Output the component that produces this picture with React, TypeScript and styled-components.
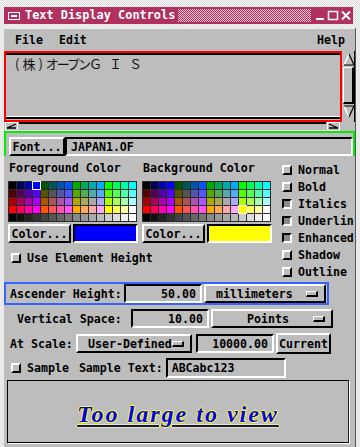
import React from 'react';
import styled, { createGlobalStyle, css } from 'styled-components';

const GlobalStyle = createGlobalStyle`
  html, body { margin: 0; padding: 0; }
  body {
    width: 360px;
    height: 447px;
    overflow: hidden;
    background: repeating-conic-gradient(#f6f6f6 0 25%, #dedede 0 50%) 0 0 / 2px 2px;
    font-family: "DejaVu Sans Mono", "Liberation Mono", monospace;
  }
`;

const raised = css`
  border: 2px solid;
  border-color: #ffffff #000000 #000000 #ffffff;
`;

const sunken = css`
  border: 2px solid;
  border-color: #000000 #ffffff #ffffff #000000;
`;

const motifFont = css`
  font-family: "DejaVu Sans Mono", "Liberation Mono", monospace;
  font-size: 11.6px;
  font-weight: bold;
  color: #000;
`;

// 窗口外框
const Page = styled.div`
  padding: 7px 0 0 4px;
`;

const Window = styled.div`
  width: 352px;
`;

const TitleBar = styled.div`
  width: 349px;
  height: 17px;
  display: flex;
  align-items: center;
  background: #b0305f;
`;

const MenuIcon = styled.div`
  width: 10px;
  height: 6px;
  margin: 0 5px 0 4px;
  border: 1px solid #fff;
  display: flex;
  align-items: center;
  justify-content: center;
  &::after {
    content: '';
    width: 6px;
    height: 2px;
    background: #fff;
  }
`;

const TitleText = styled.div`
  ${motifFont};
  font-size: 11.9px;
  color: #fff;
  line-height: 17px;
  padding-right: 3px;
`;

const TitleFill = styled.div`
  flex: 1;
  align-self: stretch;
  margin: 2px 0;
  background: repeating-conic-gradient(#b0305f 0 25%, #e8c4d2 0 50%) 0 0 / 2px 2px;
`;

const TitleButtons = styled.div`
  display: flex;
  gap: 1px;
  padding: 0 1px 0 3px;
`;

const TitleButton = styled.div`
  width: 12px;
  height: 13px;
  display: flex;
  align-items: center;
  justify-content: center;
`;

const FrameGap = styled.div`
  height: 4px;
`;

const Content = styled.div`
  background: #bdbdbd;
  border-right: 1px solid #555;
  width: 351px;
  height: 420px;
  overflow: hidden;
`;

const MenuBar = styled.div`
  ${motifFont};
  height: 22px;
  display: flex;
  align-items: center;
  padding: 0 10px 0 11px;
  gap: 16px;
  border-top: 1px solid #eee;
`;

const MenuItem = styled.span<{ $right?: boolean }>`
  margin-left: ${p => (p.$right ? 'auto' : '0')};
`;

// 文字区域
const ScrollArea = styled.div`
  display: grid;
  grid-template-columns: 338px 13px;
  grid-template-rows: 71px 9px;
`;

const TextPane = styled.div`
  border: 2px solid #ff0000;
  position: relative;
  &::before {
    content: '';
    display: block;
    height: 2px;
    background: #000;
  }
  &::after {
    content: '';
    position: absolute;
    left: 0;
    right: 0;
    bottom: 1px;
    height: 2px;
    border-top: 1px solid #fff;
    background: #000;
  }
`;

const JapaneseText = styled.div`
  font-family: "Noto Sans CJK JP", sans-serif;
  font-size: 13px;
  color: #111;
  padding: 1px 0 0 9px;
  line-height: 16px;
  white-space: nowrap;
`;

const JpPart = styled.span<{ $spacing: number }>`
  letter-spacing: ${p => p.$spacing}px;
`;

const VScroll = styled.div`
  display: flex;
  flex-direction: column;
  padding: 2px 0 4px 1px;
  border-right: 1px solid #000;
`;

const VSlider = styled.div`
  flex: 1;
  margin: 1px 0;
  ${raised};
  border-width: 1px 2px 2px 1px;
`;

const HScroll = styled.div`
  display: flex;
  align-items: stretch;
  padding: 0 2px 0 1px;
`;

const HSlider = styled.div`
  flex: 1;
  margin: 0 1px;
  border-top: 2px solid #000;
  border-bottom: 1px solid #fff;
`;

const ArrowBox = styled.div<{ $w: number; $h: number }>`
  width: ${p => p.$w}px;
  height: ${p => p.$h}px;
  display: flex;
  flex-shrink: 0;
`;

// 字体行
const FontRow = styled.div`
  height: 25px;
  box-sizing: border-box;
  border: 2px solid #00ee00;
  border-bottom: none;
  display: flex;
  align-items: flex-end;
  padding-left: 3px;
`;

const PushButton = styled.div<{ $w: number; $h?: number }>`
  ${motifFont};
  ${raised};
  box-sizing: border-box;
  width: ${p => p.$w}px;
  height: ${p => p.$h ?? 19}px;
  display: flex;
  align-items: center;
  justify-content: center;
  flex-shrink: 0;
`;

const TextField = styled.div<{ $w?: number; $align?: string; $h?: number }>`
  ${motifFont};
  ${sunken};
  box-sizing: border-box;
  width: ${p => (p.$w ? `${p.$w}px` : 'auto')};
  flex: ${p => (p.$w ? '0 0 auto' : '1')};
  height: ${p => p.$h ?? 19}px;
  display: flex;
  align-items: center;
  justify-content: ${p => p.$align ?? 'flex-start'};
  padding: 0 4px;
  white-space: nowrap;
  overflow: hidden;
`;

// 颜色区
const Middle = styled.div`
  display: flex;
  height: 126px;
`;

const ColorColumn = styled.div`
  width: 272px;
  padding-left: 4px;
  flex-shrink: 0;
`;

const PaletteRow = styled.div`
  display: flex;
  gap: 4px;
`;

const ColorPanel = styled.div`
  width: 130px;
`;

const Label = styled.div<{ $indent?: number }>`
  ${motifFont};
  white-space: nowrap;
  padding-left: ${p => p.$indent ?? 0}px;
`;

const PanelLabel = styled(Label)`
  height: 25px;
  line-height: 16px;
  padding-top: 4px;
  box-sizing: border-box;
  padding-left: 1px;
`;

const Palette = styled.div`
  display: grid;
  grid-template-columns: repeat(16, 7px);
  grid-auto-rows: 7px;
  gap: 1px;
  padding: 1px;
  width: 129px;
  box-sizing: border-box;
  background: #2a2a2a;
`;

const Cell = styled.div<{ $selected?: boolean }>`
  position: relative;
  ${p =>
    p.$selected &&
    css`
      outline: 1px solid #fff;
      outline-offset: 0px;
      z-index: 1;
    `}
`;

const ColorControls = styled.div`
  display: flex;
  gap: 2px;
  margin-top: 2px;
`;

const Swatch = styled.div<{ $color: string }>`
  flex: 1;
  height: 19px;
  box-sizing: border-box;
  border: 2px solid;
  border-color: #000 #fff #fff #000;
  background: ${p => p.$color};
`;

const ToggleRow = styled.div`
  ${motifFont};
  display: flex;
  align-items: center;
  gap: 6px;
  height: 17px;
  white-space: nowrap;
`;

const ToggleBox = styled.div<{ $on?: boolean }>`
  width: 10px;
  height: 10px;
  box-sizing: border-box;
  border: 2px solid;
  flex-shrink: 0;
  border-color: ${p => (p.$on ? '#000 #fff #fff #000' : '#fff #000 #000 #fff')};
  background: ${p => (p.$on ? '#8a8a8a' : '#bdbdbd')};
`;

const UseHeight = styled.div`
  margin-top: 6px;
  padding-left: 3px;
`;

const StyleColumn = styled.div`
  width: 72px;
  padding-top: 5px;
  padding-left: 2px;
  overflow: hidden;
`;

// 高度设置
const FieldRow = styled.div<{ $outline?: string }>`
  display: flex;
  align-items: center;
  gap: 2px;
  height: 23px;
  width: ${p => (p.$outline ? '325px' : 'auto')};
  box-sizing: border-box;
  border: 2px solid ${p => p.$outline ?? 'transparent'};
  padding-left: 4px;
  margin-bottom: 2px;
`;

const RowLabel = styled(Label)<{ $w: number }>`
  width: ${p => p.$w}px;
  flex-shrink: 0;
`;

const OptionMenu = styled(PushButton)`
  justify-content: space-between;
  padding: 0 6px 0 10px;
  font-weight: bold;
`;

const OptionIndicator = styled.span`
  width: 12px;
  height: 6px;
  box-sizing: border-box;
  ${raised};
  border-width: 1px 2px 2px 1px;
`;

const SampleRow = styled.div`
  display: flex;
  align-items: center;
  height: 22px;
  padding-left: 7px;
  gap: 6px;
`;

const Preview = styled.div`
  margin: 1px 0 0 3px;
  width: 342px;
  height: 63px;
  box-sizing: border-box;
  border: 1px solid #000;
  border-right-color: #222;
  box-shadow: 1px 1px 0 #fff;
  display: flex;
  align-items: center;
  justify-content: center;
`;

const PreviewText = styled.span`
  font-family: "Liberation Serif", "DejaVu Serif", serif;
  font-style: italic;
  font-weight: bold;
  font-size: 24px;
  letter-spacing: 2px;
  color: #0000ff;
  text-decoration: underline;
  text-decoration-thickness: 2px;
  text-underline-offset: 3px;
  text-shadow: 1px 0 0 #ffff00, -1px 0 0 #ffff00, 0 1px 0 #ffff00, 0 -1px 0 #ffff00;
  margin-top: 5px;
`;

const levels = ['00', '55', 'aa', 'ff'];
const paletteColors: string[] = [];
for (let r = 0; r < 4; r++) {
  for (let g = 0; g < 4; g++) {
    for (let b = 0; b < 4; b++) {
      paletteColors.push(`#${levels[r]}${levels[g]}${levels[b]}`);
    }
  }
}
for (let i = 0; i < 16; i++) {
  const h = (i * 17).toString(16).padStart(2, '0');
  paletteColors.push(`#${h}${h}${h}`);
}

const ArrowUp = ({ down }: { down?: boolean }) => (
  <svg width="12" height="13" viewBox="0 0 12 13" style={{ transform: down ? 'scaleY(-1)' : undefined }}>
    <polygon points="6,1 11,12 1,12" fill="#bdbdbd" />
    <polyline points="1,12 6,1" stroke="#fff" strokeWidth="1.5" fill="none" />
    <polyline points="6,1 11,12 1,12" stroke="#000" strokeWidth="1.2" fill="none" />
  </svg>
);

const ArrowSide = ({ right }: { right?: boolean }) => (
  <svg width="13" height="9" viewBox="0 0 13 9" style={{ transform: right ? 'scaleX(-1)' : undefined }}>
    <rect x="0" y="0" width="13" height="9" fill="#fff" />
    <rect x="1" y="1" width="11" height="7" fill="#bdbdbd" />
    <polyline points="11,2 2,6 11,6" stroke="#000" strokeWidth="1.3" fill="none" />
  </svg>
);

const Palettes = ({ selected }: { selected: number }) => (
  <Palette>
    {paletteColors.map((c, i) => (
      <Cell key={i} style={{ background: c }} $selected={i === selected} />
    ))}
  </Palette>
);

const styles: [string, boolean][] = [
  ['Normal', false],
  ['Bold', false],
  ['Italics', true],
  ['Underline', true],
  ['Enhanced', true],
  ['Shadow', false],
  ['Outline', false],
];

function App() {
  return (
    <Page>
      <GlobalStyle />
      <Window>
        <TitleBar>
          <MenuIcon />
          <TitleText>Text Display Controls</TitleText>
          <TitleFill />
          <TitleButtons>
            <TitleButton>
              <svg width="12" height="13" viewBox="0 0 12 13">
                <rect x="2" y="9" width="8" height="2" fill="#fff" />
              </svg>
            </TitleButton>
            <TitleButton>
              <svg width="12" height="13" viewBox="0 0 12 13">
                <rect x="1.5" y="2.5" width="9" height="8" stroke="#fff" strokeWidth="1.5" fill="none" />
              </svg>
            </TitleButton>
            <TitleButton>
              <svg width="12" height="13" viewBox="0 0 12 13">
                <path d="M2 2.5 L10 10.5 M10 2.5 L2 10.5" stroke="#fff" strokeWidth="2" />
              </svg>
            </TitleButton>
          </TitleButtons>
        </TitleBar>
        <FrameGap />
        <Content>
          <MenuBar>
            <MenuItem>File</MenuItem>
            <MenuItem>Edit</MenuItem>
            <MenuItem $right>Help</MenuItem>
          </MenuBar>

          <ScrollArea>
            <TextPane>
              <JapaneseText>
                <JpPart $spacing={3}>(株)</JpPart>
                <JpPart $spacing={-2}>オープン</JpPart>
                <JpPart $spacing={7}>ＧＩＳ</JpPart>
              </JapaneseText>
            </TextPane>
            <VScroll>
              <ArrowBox $w={12} $h={13}><ArrowUp /></ArrowBox>
              <VSlider />
              <ArrowBox $w={12} $h={13}><ArrowUp down /></ArrowBox>
            </VScroll>
            <HScroll>
              <ArrowBox $w={13} $h={9}><ArrowSide /></ArrowBox>
              <HSlider />
              <ArrowBox $w={13} $h={9}><ArrowSide right /></ArrowBox>
            </HScroll>
            <div />
          </ScrollArea>

          <FontRow>
            <PushButton $w={56}>Font...</PushButton>
            <TextField>JAPAN1.OF</TextField>
          </FontRow>

          <Middle>
            <ColorColumn>
              <PaletteRow>
                <ColorPanel>
                  <PanelLabel>Foreground Color</PanelLabel>
                  <Palettes selected={3} />
                  <ColorControls>
                    <PushButton $w={63}>Color...</PushButton>
                    <Swatch $color="#0000ff" />
                  </ColorControls>
                </ColorPanel>
                <ColorPanel>
                  <PanelLabel>Background Color</PanelLabel>
                  <Palettes selected={60} />
                  <ColorControls>
                    <PushButton $w={63}>Color...</PushButton>
                    <Swatch $color="#ffff00" />
                  </ColorControls>
                </ColorPanel>
              </PaletteRow>
              <UseHeight>
                <ToggleRow>
                  <ToggleBox />
                  Use Element Height
                </ToggleRow>
              </UseHeight>
            </ColorColumn>
            <StyleColumn>
              {styles.map(([name, on]) => (
                <ToggleRow key={name}>
                  <ToggleBox $on={on} />
                  {name}
                </ToggleRow>
              ))}
            </StyleColumn>
          </Middle>

          <FieldRow $outline="#3366ff">
            <RowLabel $w={112}>Ascender Height:</RowLabel>
            <TextField $w={78} $align="flex-end">50.00</TextField>
            <OptionMenu $w={122}>
              millimeters
              <OptionIndicator />
            </OptionMenu>
          </FieldRow>
          <FieldRow>
            <RowLabel $w={112} $indent={7}>Vertical Space:</RowLabel>
            <TextField $w={78} $align="flex-end">10.00</TextField>
            <OptionMenu $w={122}>
              <span style={{ flex: 1, textAlign: 'center' }}>Points</span>
              <OptionIndicator />
            </OptionMenu>
          </FieldRow>
          <FieldRow>
            <RowLabel $w={64}>At Scale:</RowLabel>
            <OptionMenu $w={116}>
              User-Defined
              <OptionIndicator />
            </OptionMenu>
            <TextField $w={78} $align="flex-end" style={{ marginLeft: 2 }}>10000.00</TextField>
            <PushButton $w={55} $h={21}>Current</PushButton>
          </FieldRow>
          <SampleRow>
            <ToggleBox />
            <Label>Sample</Label>
            <Label style={{ marginLeft: 4 }}>Sample Text:</Label>
            <TextField $w={120} $h={20} style={{ marginLeft: -3 }}>ABCabc123</TextField>
          </SampleRow>
          <Preview>
            <PreviewText>Too large to view</PreviewText>
          </Preview>
        </Content>
      </Window>
    </Page>
  );
}

export default App;
